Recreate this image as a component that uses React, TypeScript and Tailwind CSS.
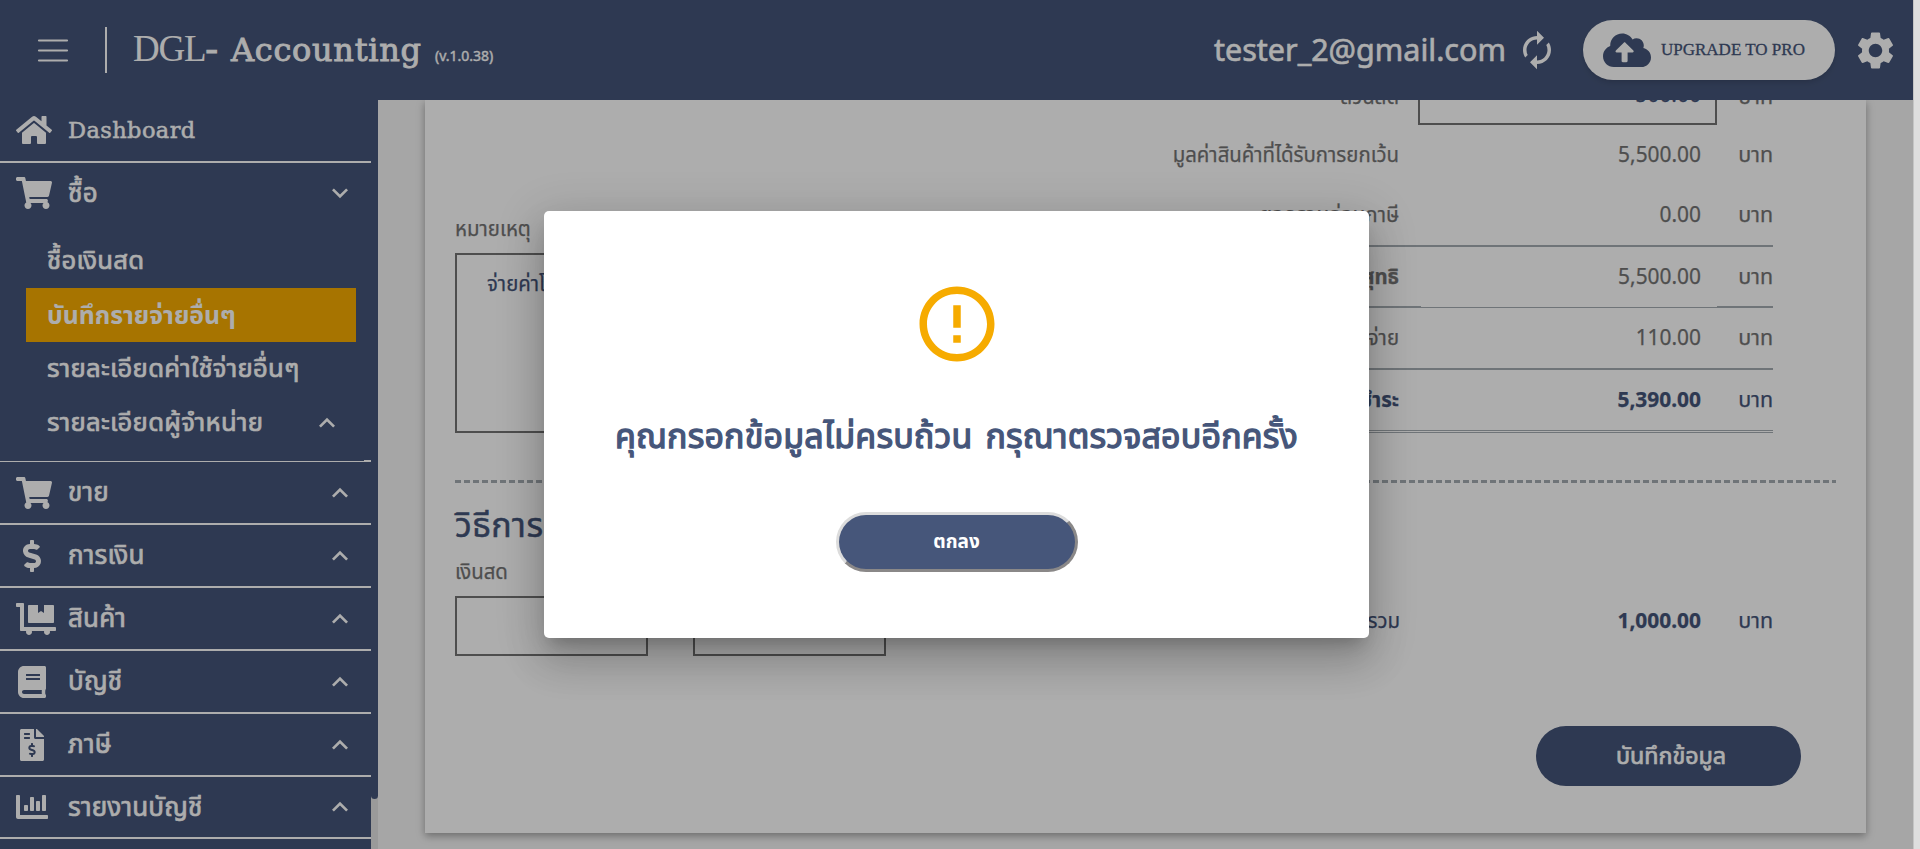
import React from "react";
import {
  FaHome, FaShoppingCart, FaDollarSign, FaDollyFlatbed, FaBook,
  FaFileInvoiceDollar, FaChartBar, FaCloudUploadAlt,
} from "react-icons/fa";
import { MdAutorenew, MdSettings, MdExpandLess, MdExpandMore, MdErrorOutline } from "react-icons/md";

function Header() {
  return (
    <header className="flex h-[100px] w-[1914px] shrink-0 items-center bg-[#455579] text-white">
      <svg className="ml-[37px] h-8 w-8" viewBox="0 0 32 32" fill="none" stroke="currentColor" strokeWidth="2.2" strokeLinecap="round">
        <path d="M2 6.5h28M2 16.5h28M2 26.5h28" />
      </svg>
      <div className="ml-9 h-[46px] w-[2px] bg-white" />
      <h1 className="ml-[26px] flex items-baseline whitespace-nowrap pt-[4px] leading-[50px]">
        <span className="w-[98px] font-['Liberation_Serif',serif] text-[37px] tracking-[-1.2px]">
          DGL<span className="[-webkit-text-stroke:1px_currentColor]">-</span>
        </span>
        <span className="w-[204px] font-['DejaVu_Serif',serif] text-[32px] tracking-[0.7px] [-webkit-text-stroke:0.9px_currentColor]">Accounting</span>
        <span className="font-['Noto_Sans',sans-serif] text-[14px] [-webkit-text-stroke:0.4px_currentColor]">(v.1.0.38)</span>
      </h1>
      <div className="ml-auto flex items-center">
        <span className="w-[302px] whitespace-nowrap pb-[2px] font-['Noto_Sans',sans-serif] text-[30.5px] leading-[50px] [-webkit-text-stroke:0.6px_currentColor]">tester_2@gmail.com</span>
        <MdAutorenew className="size-[42px]" />
        <button className="ml-[25px] flex h-[60px] w-[252px] items-center rounded-[30px] bg-white pl-[20px] text-[#455579] shadow-md">
          <FaCloudUploadAlt className="h-[38.4px] w-12" />
          <span className="ml-[10px] whitespace-nowrap font-['Liberation_Serif',serif] text-[17px] [-webkit-text-stroke:0.3px_currentColor]">UPGRADE TO PRO</span>
        </button>
        <MdSettings className="ml-[18px] mr-[16px] size-[45px]" />
      </div>
    </header>
  );
}

const rowBase = "flex shrink-0 items-center border-b-2 border-white pl-4 pr-[15px]";
const labelCls = "whitespace-nowrap pb-[3px] text-[26px] leading-[38px] tracking-[0.2px] [-webkit-text-stroke:0.7px_currentColor]";

function MenuRow({ icon, label, h = "h-[63px]" }: { icon: React.ReactNode; label: string; h?: string }) {
  return (
    <div className={`${rowBase} ${h}`}>
      <span className="flex w-[52px] shrink-0 items-center">{icon}</span>
      <span className={labelCls}>{label}</span>
      <MdExpandLess className="ml-auto size-8" />
    </div>
  );
}

function Sidebar() {
  return (
    <aside className="flex h-full w-[378px] shrink-0 bg-[#455579] text-white">
      <nav className="flex w-[371px] flex-col overflow-hidden">
        <div className={`${rowBase} h-[63px]`}>
          <span className="flex w-[52px] shrink-0 pb-[2px]"><FaHome className="size-9" /></span>
          <span className="font-['DejaVu_Serif',serif] text-[22.5px] tracking-[0.4px] [-webkit-text-stroke:0.5px_currentColor]">Dashboard</span>
        </div>
        <div className="flex h-[71px] shrink-0 items-start pl-4 pr-[15px] pt-[10px]">
          <span className="flex h-10 w-[52px] shrink-0 items-center"><FaShoppingCart className="h-8 w-9" /></span>
          <span className={labelCls}>ซื้อ</span>
          <MdExpandMore className="ml-auto mt-1 size-8" />
        </div>
        <ul className="flex h-[226px] shrink-0 flex-col pl-[26px] pr-[15px]">
          {["ชื้อเงินสด", "บันทึกรายจ่ายอื่นๆ", "รายละเอียดค่าใช้จ่ายอื่นๆ", "รายละเอียดผู้จำหน่าย"].map((t, i) => (
            <li key={t} className={`flex h-[54px] shrink-0 items-center pl-[21px] pr-[13px] ${i === 1 ? "bg-[#f6ab00] text-[24.8px] font-bold" : "text-[25.7px] tracking-[0.28px] [-webkit-text-stroke:0.7px_currentColor]"}`}>
              <span className="whitespace-nowrap pb-[3px] leading-[40px]">{t}</span>
              {i === 3 && <MdExpandLess className="ml-auto size-8" />}
            </li>
          ))}
        </ul>
        <div className="ml-auto h-px w-[7px] shrink-0 bg-white" />
        <div className="h-px w-full shrink-0 bg-white" />
        <MenuRow icon={<FaShoppingCart className="h-8 w-9" />} label="ขาย" />
        <MenuRow icon={<FaDollarSign className="size-8" />} label="การเงิน" />
        <MenuRow icon={<FaDollyFlatbed className="h-8 w-10" />} label="สินค้า" />
        <MenuRow icon={<FaBook className="size-8" />} label="บัญชี" />
        <MenuRow icon={<FaFileInvoiceDollar className="size-8" />} label="ภาษี" />
        <MenuRow icon={<FaChartBar className="size-8" />} label="รายงานบัญชี" h="h-[62px]" />
      </nav>
      <div className="flex w-[7px] flex-col bg-[#e4e4e4]">
        <div className="h-[699px] rounded-b bg-[#455579]" />
      </div>
    </aside>
  );
}

type Total = { label: string; value: string; h: string; line: string; bold?: boolean; blue?: boolean; split?: boolean };
const totals: Total[] = [
  { label: "มูลค่าสินค้าที่ได้รับการยกเว้น", value: "5,500.00", h: "h-[60px]", line: "" },
  { label: "ยอดรวมก่อนภาษี", value: "0.00", h: "h-[62px]", line: "border-b-2" },
  { label: "ยอดรวมสุทธิ", value: "5,500.00", h: "h-[59px]", line: "", split: true },
  { label: "หักภาษี ณ ที่จ่าย", value: "110.00", h: "h-[62px]", line: "border-b-2" },
  { label: "ยอดชำระ", value: "5,390.00", h: "h-[63px]", line: "border-b-[3px] border-double", bold: true, blue: true },
];

function Card() {
  return (
    <section className="flex h-[733px] w-[1441px] flex-col bg-white px-[30px] text-[20.4px] text-[#747474] shadow-[0_3px_8px_rgba(0,0,0,0.35)] [-webkit-text-stroke:0.25px_currentColor]">
      <div className="flex h-[333px]">
        <div className="flex w-[660px] flex-col pt-[113px]">
          <label className="h-[40px] leading-[30px]">หมายเหตุ</label>
          <div className="h-[180px] border-2 border-[#747474] px-[30px] pt-[13px] leading-[30px] text-[#455579]">จ่ายค่าโทรศัพท์</div>
        </div>
        <div className="ml-auto mr-[63px] flex w-[640px] flex-col">
          <div className="flex h-[25px] items-end">
            <span className="mb-[14px] w-[266px] text-right leading-[30px]">ส่วนลด</span>
            <span className="ml-[19px] h-[60px] w-[299px] shrink-0 border-2 border-[#747474] pr-[14px] text-right text-[21px] leading-[54px] text-[#455579]">500.00</span>
            <span className="mb-[14px] ml-auto text-[21.5px] leading-[30px]">บาท</span>
          </div>
          {totals.map((t) => (
            <React.Fragment key={t.label}>
              <div className={`flex items-center border-[#a4acb2] ${t.h} ${t.line} ${t.blue ? "text-[#455579]" : ""}`}>
                <span className={`w-[266px] whitespace-nowrap pb-[2px] text-right leading-[30px] ${t.bold || t.split ? "font-bold" : ""}`}>{t.label}</span>
                <span className={`ml-auto w-[200px] text-right text-[20.9px] ${t.bold ? "font-bold" : ""}`}>{t.value}</span>
                <span className="w-[72px] pb-[2px] text-right text-[21.5px] leading-[30px]">บาท</span>
              </div>
              {t.split && (
                <div className="flex h-[2px] items-end">
                  <span className="h-[2px] w-[288px] bg-[#a4acb2]" />
                  <span className="h-px flex-1 bg-[#a4acb2]" />
                  <span className="h-[2px] w-[56px] bg-[#a4acb2]" />
                </div>
              )}
            </React.Fragment>
          ))}
        </div>
      </div>
      <div className="mt-[47px] h-[3px] w-[1381px] bg-[repeating-linear-gradient(90deg,#a4acb2_0_6px,transparent_6px_9px)]" />
      <h2 className="mt-[19px] h-[44px] text-[34px] leading-[44px] tracking-[0.5px] text-[#455579] [-webkit-text-stroke:0.5px_currentColor]">วิธีการชำระเงิน</h2>
      <label className="mt-[10px] h-[40px] leading-[30px]">เงินสด</label>
      <div className="flex h-[60px] items-center text-[#455579]">
        <div className="h-[60px] w-[193px] border-2 border-[#747474]" />
        <div className="ml-[45px] h-[60px] w-[193px] border-2 border-[#747474]" />
        <span className="mb-[12px] ml-auto leading-[30px]">รวม</span>
        <span className="mb-[11px] w-[301px] text-right text-[20.9px] font-bold">1,000.00</span>
        <span className="mb-[12px] mr-[63px] w-[72px] text-right text-[21.5px] leading-[30px]">บาท</span>
      </div>
      <button className="ml-auto mr-[35px] mt-[70px] h-[60px] w-[265px] rounded-[30px] bg-[#455579] pb-[2px] pl-[5px] text-[23.3px] text-white [-webkit-text-stroke:0.7px_currentColor]">บันทึกข้อมูล</button>
    </section>
  );
}

export default function App() {
  return (
    <div className="relative flex h-[849px] w-[1920px] overflow-hidden bg-[#f5f5f5] font-['Noto_Sans','Noto_Sans_Thai',sans-serif]">
      <div className="flex w-[1914px] flex-col">
        <Header />
        <div className="flex h-[749px]">
          <Sidebar />
          <main className="h-full flex-1 overflow-hidden pl-[47px]"><Card /></main>
        </div>
      </div>
      <div className="absolute inset-0 flex bg-black/[0.32] pl-[544px] pt-[211px]">
        <div role="dialog" className="flex h-[427px] w-[825px] flex-col items-center rounded-[5px] bg-white pt-[68px] shadow-[0_11px_15px_-7px_rgba(0,0,0,0.2),0_24px_38px_3px_rgba(0,0,0,0.14),0_9px_46px_8px_rgba(0,0,0,0.12)]">
          <MdErrorOutline className="size-[90px] text-[#f6ab00]" />
          <p className="mt-[36px] whitespace-nowrap text-[34px] leading-[60px] tracking-[0.17px] text-[#46567a] [word-spacing:4px] [-webkit-text-stroke:1.3px_currentColor]">คุณกรอกข้อมูลไม่ครบถ้วน กรุณาตรวจสอบอีกครั้ง</p>
          <button className="mt-[47px] h-[60px] w-[242px] rounded-[30px] border-[3px] border-[#dcdcdc] border-b-[#8a8888] border-r-[#8a8888] bg-[#46567a] pb-[2px] text-[19px] font-bold text-white">ตกลง</button>
        </div>
      </div>
      <div className="absolute right-0 top-0 h-full w-[7px] border-l border-[#c4c4c4] bg-[#dedede]" />
    </div>
  );
}
